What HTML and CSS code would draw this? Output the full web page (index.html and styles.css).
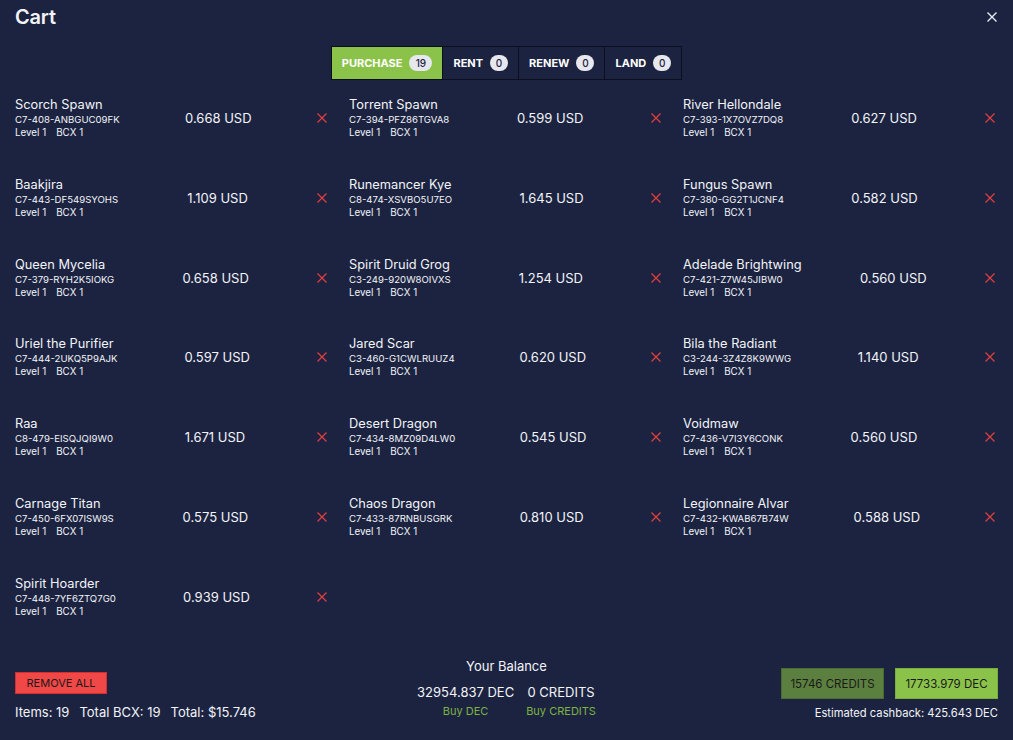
FILE: index.html
```html
<!DOCTYPE html>
<html lang="en">
<head>
  <meta charset="UTF-8">
  <title>Cart</title>
  <link rel="stylesheet" href="styles.css">
</head>
<body>
  <div class="modal">
    <div class="modal-header">
      <h1>Cart</h1>
      <svg class="close" width="10" height="10" viewBox="0 0 10 10"><path d="M0.5 0.5L9.5 9.5M9.5 0.5L0.5 9.5" stroke="#e8eaf2" stroke-width="1.4"/></svg>
    </div>

    <div class="tabs">
      <div class="tab active">PURCHASE <span class="badge">19</span></div>
      <div class="tab">RENT <span class="badge">0</span></div>
      <div class="tab">RENEW <span class="badge">0</span></div>
      <div class="tab">LAND <span class="badge">0</span></div>
    </div>

    <div class="items">
      <div class="item"><div class="info"><div class="name">Scorch Spawn</div><div class="uid">C7-408-ANBGUC09FK</div><div class="meta"><span>Level 1</span><span>BCX 1</span></div></div><div class="price">0.668 USD</div><svg class="remove" width="10" height="10" viewBox="0 0 10 10"><path d="M0.5 0.5L9.5 9.5M9.5 0.5L0.5 9.5"/></svg></div>
      <div class="item"><div class="info"><div class="name">Torrent Spawn</div><div class="uid">C7-394-PFZ86TGVA8</div><div class="meta"><span>Level 1</span><span>BCX 1</span></div></div><div class="price">0.599 USD</div><svg class="remove" width="10" height="10" viewBox="0 0 10 10"><path d="M0.5 0.5L9.5 9.5M9.5 0.5L0.5 9.5"/></svg></div>
      <div class="item"><div class="info"><div class="name">River Hellondale</div><div class="uid">C7-393-1X7OVZ7DQ8</div><div class="meta"><span>Level 1</span><span>BCX 1</span></div></div><div class="price">0.627 USD</div><svg class="remove" width="10" height="10" viewBox="0 0 10 10"><path d="M0.5 0.5L9.5 9.5M9.5 0.5L0.5 9.5"/></svg></div>

      <div class="item"><div class="info"><div class="name">Baakjira</div><div class="uid">C7-443-DF549SYOHS</div><div class="meta"><span>Level 1</span><span>BCX 1</span></div></div><div class="price">1.109 USD</div><svg class="remove" width="10" height="10" viewBox="0 0 10 10"><path d="M0.5 0.5L9.5 9.5M9.5 0.5L0.5 9.5"/></svg></div>
      <div class="item"><div class="info"><div class="name">Runemancer Kye</div><div class="uid">C8-474-XSVBO5U7EO</div><div class="meta"><span>Level 1</span><span>BCX 1</span></div></div><div class="price">1.645 USD</div><svg class="remove" width="10" height="10" viewBox="0 0 10 10"><path d="M0.5 0.5L9.5 9.5M9.5 0.5L0.5 9.5"/></svg></div>
      <div class="item"><div class="info"><div class="name">Fungus Spawn</div><div class="uid">C7-380-GG2T1JCNF4</div><div class="meta"><span>Level 1</span><span>BCX 1</span></div></div><div class="price">0.582 USD</div><svg class="remove" width="10" height="10" viewBox="0 0 10 10"><path d="M0.5 0.5L9.5 9.5M9.5 0.5L0.5 9.5"/></svg></div>

      <div class="item"><div class="info"><div class="name">Queen Mycelia</div><div class="uid">C7-379-RYH2K5IOKG</div><div class="meta"><span>Level 1</span><span>BCX 1</span></div></div><div class="price">0.658 USD</div><svg class="remove" width="10" height="10" viewBox="0 0 10 10"><path d="M0.5 0.5L9.5 9.5M9.5 0.5L0.5 9.5"/></svg></div>
      <div class="item"><div class="info"><div class="name">Spirit Druid Grog</div><div class="uid">C3-249-920W8OIVXS</div><div class="meta"><span>Level 1</span><span>BCX 1</span></div></div><div class="price">1.254 USD</div><svg class="remove" width="10" height="10" viewBox="0 0 10 10"><path d="M0.5 0.5L9.5 9.5M9.5 0.5L0.5 9.5"/></svg></div>
      <div class="item"><div class="info"><div class="name">Adelade Brightwing</div><div class="uid">C7-421-Z7W45JIBW0</div><div class="meta"><span>Level 1</span><span>BCX 1</span></div></div><div class="price">0.560 USD</div><svg class="remove" width="10" height="10" viewBox="0 0 10 10"><path d="M0.5 0.5L9.5 9.5M9.5 0.5L0.5 9.5"/></svg></div>

      <div class="item"><div class="info"><div class="name">Uriel the Purifier</div><div class="uid">C7-444-2UKQ5P9AJK</div><div class="meta"><span>Level 1</span><span>BCX 1</span></div></div><div class="price">0.597 USD</div><svg class="remove" width="10" height="10" viewBox="0 0 10 10"><path d="M0.5 0.5L9.5 9.5M9.5 0.5L0.5 9.5"/></svg></div>
      <div class="item"><div class="info"><div class="name">Jared Scar</div><div class="uid">C3-460-G1CWLRUUZ4</div><div class="meta"><span>Level 1</span><span>BCX 1</span></div></div><div class="price">0.620 USD</div><svg class="remove" width="10" height="10" viewBox="0 0 10 10"><path d="M0.5 0.5L9.5 9.5M9.5 0.5L0.5 9.5"/></svg></div>
      <div class="item"><div class="info"><div class="name">Bila the Radiant</div><div class="uid">C3-244-3Z4Z8K9WWG</div><div class="meta"><span>Level 1</span><span>BCX 1</span></div></div><div class="price">1.140 USD</div><svg class="remove" width="10" height="10" viewBox="0 0 10 10"><path d="M0.5 0.5L9.5 9.5M9.5 0.5L0.5 9.5"/></svg></div>

      <div class="item"><div class="info"><div class="name">Raa</div><div class="uid">C8-479-EISQJQI9W0</div><div class="meta"><span>Level 1</span><span>BCX 1</span></div></div><div class="price">1.671 USD</div><svg class="remove" width="10" height="10" viewBox="0 0 10 10"><path d="M0.5 0.5L9.5 9.5M9.5 0.5L0.5 9.5"/></svg></div>
      <div class="item"><div class="info"><div class="name">Desert Dragon</div><div class="uid">C7-434-8MZ09D4LW0</div><div class="meta"><span>Level 1</span><span>BCX 1</span></div></div><div class="price">0.545 USD</div><svg class="remove" width="10" height="10" viewBox="0 0 10 10"><path d="M0.5 0.5L9.5 9.5M9.5 0.5L0.5 9.5"/></svg></div>
      <div class="item"><div class="info"><div class="name">Voidmaw</div><div class="uid">C7-436-V7I3Y6CONK</div><div class="meta"><span>Level 1</span><span>BCX 1</span></div></div><div class="price">0.560 USD</div><svg class="remove" width="10" height="10" viewBox="0 0 10 10"><path d="M0.5 0.5L9.5 9.5M9.5 0.5L0.5 9.5"/></svg></div>

      <div class="item"><div class="info"><div class="name">Carnage Titan</div><div class="uid">C7-450-6FX07ISW9S</div><div class="meta"><span>Level 1</span><span>BCX 1</span></div></div><div class="price">0.575 USD</div><svg class="remove" width="10" height="10" viewBox="0 0 10 10"><path d="M0.5 0.5L9.5 9.5M9.5 0.5L0.5 9.5"/></svg></div>
      <div class="item"><div class="info"><div class="name">Chaos Dragon</div><div class="uid">C7-433-87RNBUSGRK</div><div class="meta"><span>Level 1</span><span>BCX 1</span></div></div><div class="price">0.810 USD</div><svg class="remove" width="10" height="10" viewBox="0 0 10 10"><path d="M0.5 0.5L9.5 9.5M9.5 0.5L0.5 9.5"/></svg></div>
      <div class="item"><div class="info"><div class="name">Legionnaire Alvar</div><div class="uid">C7-432-KWAB67B74W</div><div class="meta"><span>Level 1</span><span>BCX 1</span></div></div><div class="price">0.588 USD</div><svg class="remove" width="10" height="10" viewBox="0 0 10 10"><path d="M0.5 0.5L9.5 9.5M9.5 0.5L0.5 9.5"/></svg></div>

      <div class="item"><div class="info"><div class="name">Spirit Hoarder</div><div class="uid">C7-448-7YF6ZTQ7G0</div><div class="meta"><span>Level 1</span><span>BCX 1</span></div></div><div class="price">0.939 USD</div><svg class="remove" width="10" height="10" viewBox="0 0 10 10"><path d="M0.5 0.5L9.5 9.5M9.5 0.5L0.5 9.5"/></svg></div>
    </div>

    <div class="footer">
      <div class="footer-left">
        <button class="btn-remove">REMOVE ALL</button>
        <div class="totals"><span>Items: 19</span><span>Total BCX: 19</span><span>Total: $15.746</span></div>
      </div>
      <div class="footer-mid">
        <div class="balance-title">Your Balance</div>
        <div class="balance">
          <div class="balance-col"><div>32954.837 DEC</div><a>Buy DEC</a></div>
          <div class="balance-col"><div>0 CREDITS</div><a>Buy CREDITS</a></div>
        </div>
      </div>
      <div class="footer-right">
        <div class="pay-buttons">
          <button class="btn-credits">15746 CREDITS</button>
          <button class="btn-dec">17733.979 DEC</button>
        </div>
        <div class="cashback">Estimated cashback: 425.643 DEC</div>
      </div>
    </div>
  </div>
</body>
</html>
```

FILE: styles.css
```css
body {
  margin: 0;
  background-color: #1c2340;
  font-family: Inter, 'Noto Sans', sans-serif;
  color: #f2f4f8;
}

.modal {
  width: 1013px;
  height: 740px;
  box-sizing: border-box;
  padding: 0 15px;
  display: flex;
  flex-direction: column;
}

.modal-header {
  display: flex;
  justify-content: space-between;
  align-items: center;
  height: 34px;
}

.modal-header h1 {
  margin: 0;
  font-size: 20px;
  font-weight: 600;
  letter-spacing: -0.2px;
}

.close {
  margin-right: 1px;
}

.tabs {
  display: flex;
  justify-content: center;
  margin-top: 12px;
}

.tab {
  display: flex;
  align-items: center;
  gap: 7px;
  height: 34px;
  box-sizing: border-box;
  padding: 0 10px;
  border: 1px solid #0b0e1c;
  border-left: none;
  font-size: 11px;
  font-weight: 700;
  color: #ffffff;
}

.tab:first-child {
  border-left: 1px solid #0b0e1c;
}

.tab.active {
  background-color: #8bc34a;
}

.badge {
  min-width: 18px;
  height: 16px;
  padding: 0 3px;
  box-sizing: border-box;
  border-radius: 8px;
  background-color: #e6e8ee;
  color: #1c2340;
  font-size: 10px;
  font-weight: 500;
  display: flex;
  align-items: center;
  justify-content: center;
}

.tab.active .badge {
  min-width: 23px;
}

.items {
  display: grid;
  grid-template-columns: repeat(3, 315px);
  column-gap: 19px;
  row-gap: 37.8px;
  margin-top: 17px;
}

.item {
  display: flex;
  justify-content: space-between;
  align-items: center;
  height: 42px;
}

.name {
  font-size: 12.8px;
  line-height: 16px;
}

.uid {
  font-size: 9.6px;
  line-height: 14px;
}

.meta {
  font-size: 9.8px;
  line-height: 12px;
  display: flex;
  gap: 10px;
}

.price {
  font-size: 13px;
}

.remove {
  stroke: #e53e3e;
  stroke-width: 1.2;
  margin-right: 3px;
}

.footer {
  margin-top: auto;
  height: 87px;
  display: grid;
  grid-template-columns: 1fr auto 1fr;
  align-items: start;
}

.footer-left {
  padding-top: 18px;
}

.btn-remove {
  background-color: #f04747;
  border: 1px solid #d32f2f;
  color: #1a1a1a;
  font-family: Inter, sans-serif;
  font-size: 11px;
  padding: 0 10px;
  height: 22px;
  width: 92px;
  cursor: pointer;
}

.totals {
  margin-top: 10px;
  font-size: 13px;
  display: flex;
  gap: 10px;
}

.footer-mid {
  text-align: center;
  padding-top: 5px;
  font-size: 13px;
}

.balance {
  margin-top: 10px;
  display: flex;
  gap: 12px;
  justify-content: center;
}

.balance-col a {
  display: block;
  margin-top: 4px;
  font-size: 11px;
  color: #7cb342;
}

.footer-right {
  padding-top: 15px;
  text-align: right;
}

.pay-buttons {
  display: flex;
  gap: 11px;
  justify-content: flex-end;
}

.pay-buttons button {
  height: 31px;
  width: 103px;
  font-family: Inter, sans-serif;
  font-size: 11.5px;
  color: #1a1a1a;
  cursor: pointer;
}

.btn-credits {
  background-color: #5b7f3e;
  border: 1px solid #4b6b33;
}

.btn-dec {
  background-color: #8bc34a;
  border: 1px solid #7aad3e;
}

.cashback {
  margin-top: 7px;
  font-size: 11.2px;
}
```
